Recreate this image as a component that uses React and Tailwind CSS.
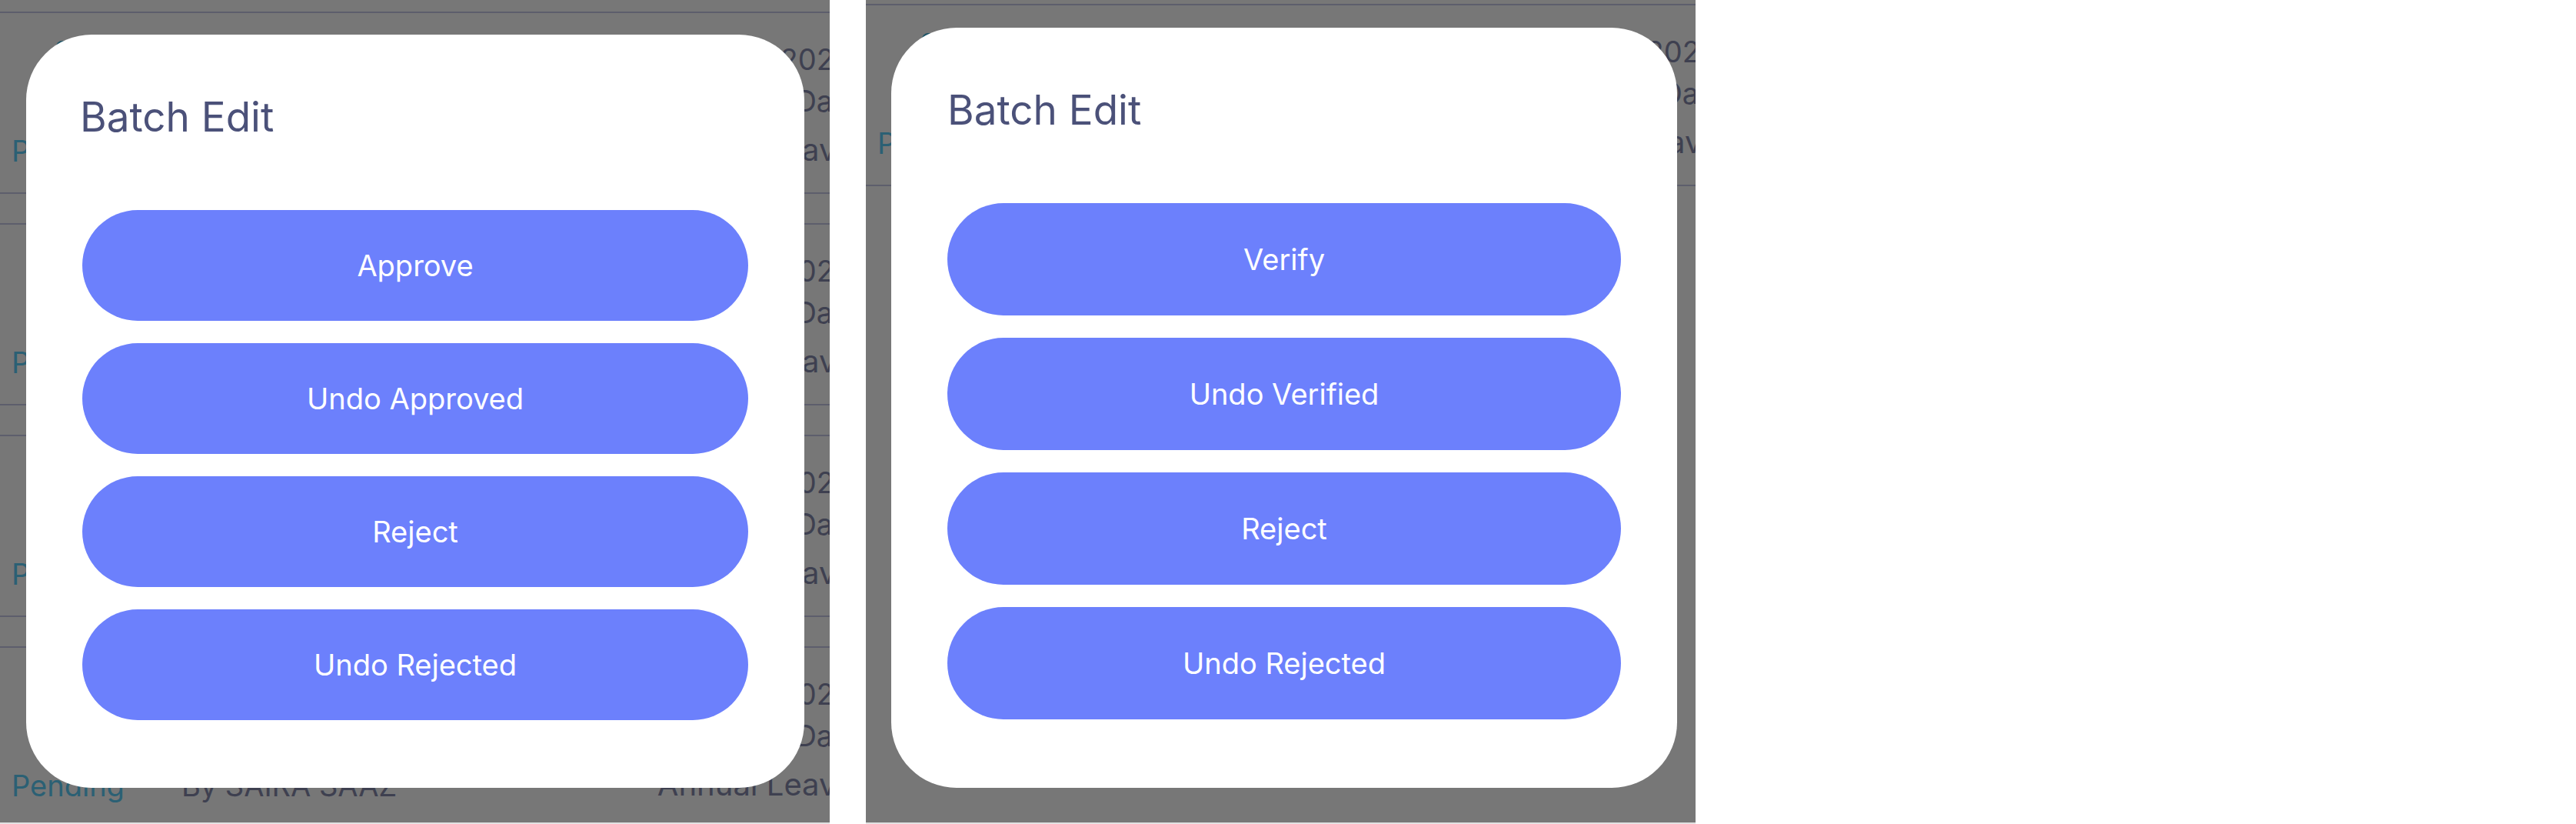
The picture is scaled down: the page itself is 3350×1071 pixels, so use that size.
import React from "react";

const dark = "text-[#3e4050]";

function Row() {
  return (
    <div className="h-[237px] w-[1104px] shrink-0 border-y-2 border-[#5d5e6c] flex flex-col pt-[41px] text-[38px] leading-none">
      <div className="flex items-start justify-between h-[38px]">
        <div className="flex items-start">
          <div className="ml-[73px] -mt-[5px] w-[44px] h-[44px] rounded-[8px] bg-[#1e5466]" />
          <span className={`ml-[24px] ${dark}`}>Saira Saaz</span>
        </div>
        <span className={`${dark} whitespace-nowrap -mr-[4px]`}>05 Jan 2025 - 06 Jan 2025</span>
      </div>
      <div className="mt-[16px] flex justify-end h-[38px]">
        <span className={`${dark} -mr-[20px]`}>2 Days</span>
      </div>
      <div className="mt-[27px] flex items-start justify-between h-[38px]">
        <div className="flex items-start">
          <span className="ml-[15px] text-[#2b6074]">Pending</span>
          <span className={`ml-[74px] ${dark}`}>By SAIRA SAAZ</span>
        </div>
        <span className={`${dark} whitespace-nowrap text-[40px] -mt-[2px] -mr-[6px]`}>Annual Leave</span>
      </div>
    </div>
  );
}

function Panel({ rows, listTop, card, titleShift, btnH, labels }) {
  return (
    <div className="relative w-[1079px] h-[1071px] shrink-0 overflow-hidden bg-[#777777] border-b-2 border-[#e2e2e2]">
      <div className={`flex flex-col gap-[38px] ${listTop}`}>
        {Array.from({ length: rows }).map((_, i) => (
          <Row key={i} />
        ))}
      </div>
      <div className={`absolute ${card} rounded-[85px] bg-white pt-[81px] px-[73px] flex flex-col`}>
        <h2 className={`text-[53px] leading-none font-normal text-[#4b5179] ${titleShift}`}>Batch Edit</h2>
        <div className="mt-[94px] flex flex-col gap-[29px]">
          {labels.map((l) => (
            <button
              key={l}
              className={`${btnH} w-full rounded-full bg-[#6c80fc] text-white text-[38px] leading-none flex items-center justify-center`}
            >
              {l}
            </button>
          ))}
        </div>
      </div>
    </div>
  );
}

export default function App() {
  return (
    <div className="w-[3350px] h-[1071px] bg-white flex items-start gap-[47px] font-['Inter','Noto_Sans',sans-serif] overflow-hidden">
      <Panel
        rows={4}
        listTop="pt-[15px]"
        card="left-[34px] top-[45px] w-[1012px] h-[979px]"
        titleShift="-ml-[3px]"
        btnH="h-[144px]"
        labels={["Approve", "Undo Approved", "Reject", "Undo Rejected"]}
      />
      <Panel
        rows={1}
        listTop="pt-[5px]"
        card="left-[33px] top-[36px] w-[1022px] h-[988px]"
        titleShift=""
        btnH="h-[146px]"
        labels={["Verify", "Undo Verified", "Reject", "Undo Rejected"]}
      />
    </div>
  );
}
